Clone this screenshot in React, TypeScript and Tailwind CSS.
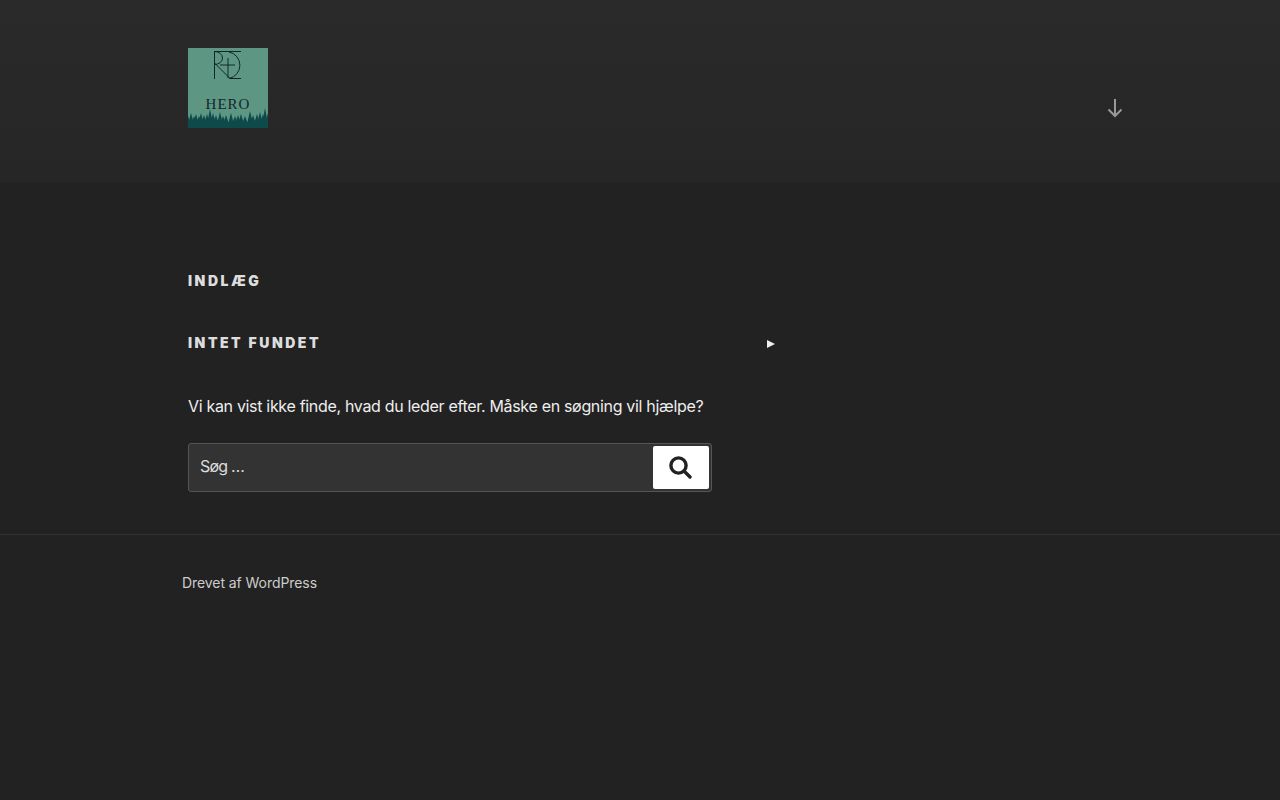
const trees = [
  [0, 68], [3, 65], [6, 68], [8, 66], [11, 68], [13, 65], [16, 67], [19, 66], [22, 61], [25, 65],
  [28, 67], [32, 64], [35, 68], [38, 67], [43, 65], [47, 68], [50, 67], [53, 66], [57, 68], [62, 63],
  [65, 67], [69, 66], [72, 64], [75, 66], [77, 60], [80, 65],
];

function HeroLogo() {
  return (
    <svg width="80" height="80" viewBox="0 0 80 80" className="block">
      <rect width="80" height="80" fill="#5e9684" />
      <g fill="none" stroke="#10282a" strokeWidth="1">
        <path d="M26.5 3V31" />
        <path d="M26.5 3.5H53" />
        <path d="M26.5 3.5a8 6.5 0 0 1 8 6.5a8 6.5 0 0 1-8 6.5" />
        <path d="M26.5 15L42 30.5H53" />
        <path d="M41 4a13.5 13.5 0 0 1 0 26.5" />
        <path d="M40 10V30" />
        <path d="M32 17H47" />
      </g>
      <text
        x="40"
        y="60.5"
        textAnchor="middle"
        fontFamily='"Liberation Serif", serif'
        fontSize="15"
        letterSpacing="1"
        fill="#10282a"
      >
        HERO
      </text>
      {trees.map(([x, y]) => (
        <path key={x} d={`M${x} ${y}L${x + 3} 76H${x - 3}Z`} fill="#0f4a4a" />
      ))}
      <rect y="74" width="80" height="6" fill="#0f4a4a" />
    </svg>
  );
}

export default function App() {
  return (
    <div className="min-h-[800px] bg-[#222222] font-['Inter',sans-serif] text-[#eeeeee]">
      <header className="flex h-[182px] items-start justify-between bg-gradient-to-b from-[#2a2a2a] to-[#262626] pl-[188px] pr-[157px] pt-12">
        <HeroLogo />
        <svg width="16" height="20" viewBox="0 0 16 20" fill="none" stroke="#999999" strokeWidth="2" className="mt-[50px]">
          <path d="M8 1V18" />
          <path d="M1.5 11.5L8 18L14.5 11.5" />
        </svg>
      </header>

      <main className="flex flex-col items-start px-[188px] pt-[90px]">
        <h2 className="text-[14px] leading-[18px] font-black tracking-[0.18em] text-[#dddddd]">INDLÆG</h2>
        <div className="mt-11 flex w-[587px] items-center justify-between">
          <h1 className="text-[14px] leading-[18px] font-black tracking-[0.18em] text-[#dddddd]">INTET FUNDET</h1>
          <svg width="8" height="8" viewBox="0 0 8 8" className="mt-0.5">
            <path d="M0 0L8 4L0 8Z" fill="#eeeeee" />
          </svg>
        </div>
        <p className="mt-[42px] text-[16px] leading-6 tracking-[-0.02em]">
          Vi kan vist ikke finde, hvad du leder efter. Måske en søgning vil hjælpe?
        </p>
        <form className="mt-[25px] flex h-[49px] w-[524px] items-center justify-between rounded-[3px] border border-[#555555] bg-[#333333] pl-[11px] pr-[2px]">
          <span className="-mt-[3px] text-[16px] tracking-[-0.05em] text-[#dddddd]">Søg …</span>
          <button className="flex h-[43px] w-[56px] items-center justify-center rounded-[2px] bg-white" type="button">
            <svg width="23" height="23" viewBox="0 0 23 23" fill="none" stroke="#222222" strokeWidth="3.4" className="-ml-[1px]">
              <circle cx="9.5" cy="9.5" r="7.6" />
              <path d="M15 15L21 21" strokeLinecap="round" />
            </svg>
          </button>
        </form>
      </main>

      <footer className="mt-[42px] border-t border-[#333333] pl-[182px] pt-[38px]">
        <p className="text-[14px] leading-5 tracking-[-0.005em] text-[#cccccc]">Drevet af WordPress</p>
      </footer>
    </div>
  );
}
